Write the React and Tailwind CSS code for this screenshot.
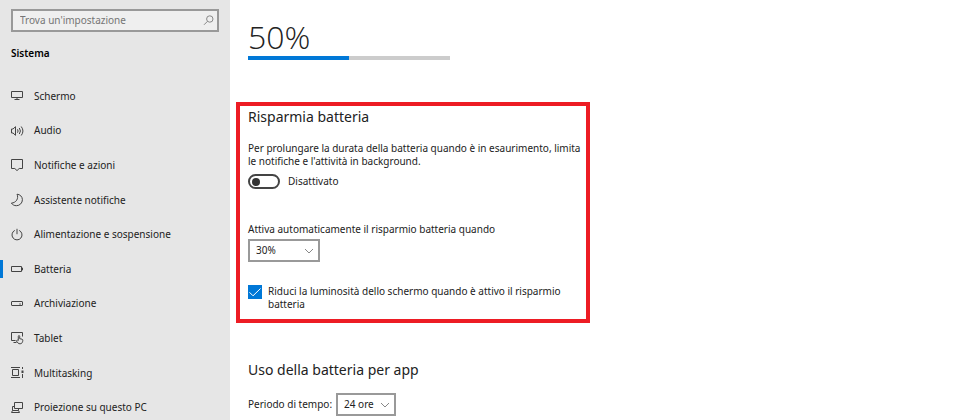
import { useState } from "react";

// icons are drawn on a 14px grid
function Icon({ children }) {
  return (
    <svg
      className="h-[14px] w-[14px] shrink-0"
      viewBox="0 0 14 14"
      fill="none"
      stroke="#444"
      strokeWidth="1"
      aria-hidden="true"
    >
      {children}
    </svg>
  );
}

const items = [
  {
    label: "Schermo",
    icon: <path d="M1.5 2.500h11v6h-11zM7 8.500v2M4.500 10.500h5" />,
  },
  {
    label: "Audio",
    icon: (
      <>
        <path d="M1.500 5h1.500l2.500-2.300v8.600L3 9H1.500z" />
        <path d="M7.500 5.300a3 3 0 0 1 0 3.400M9.300 4a5 5 0 0 1 0 6M11.200 2.500a7.400 7.400 0 0 1 0 9" />
      </>
    ),
  },
  {
    label: "Notifiche e azioni",
    icon: <path d="M1.500 1.500h11v9H9.200L7 12.600 4.800 10.500H1.500z" />,
  },
  {
    label: "Assistente notifiche",
    icon: (
      <path d="M7 1.200c3.100.2 5.400 2.500 5.400 5.500a6 6 0 0 1-6 6c-2.100 0-3.900-.9-5-2.600C6 9.900 9 5.500 7 1.200z" />
    ),
  },
  {
    label: "Alimentazione e sospensione",
    icon: <path d="M7 .8v5.400M4.800 2.400a5 5 0 1 0 4.400 0" />,
  },
  {
    label: "Batteria",
    icon: <path d="M1.500 4.500h10v5h-10zM12.500 5.700v2.600" />,
  },
  {
    label: "Archiviazione",
    icon: (
      <>
        <rect x="1.500" y="4.500" width="11" height="4" rx=".5" />
        <path d="M9.300 7h1.500" />
      </>
    ),
  },
  {
    label: "Tablet",
    icon: (
      <>
        <path d="M5.500 9.500h-4v-8h11v4M3.500 11.500h3" />
        <path d="M8.300 9.500V5.300c0-1 1.400-1 1.400 0v2.400l2.300.5c.6.200.8.500.8 1.100-.1 2-.9 3.500-2.700 3.500-1.700 0-2.500-1-3.800-3 .6-.8 1.300-.8 2-.3z" />
      </>
    ),
  },
  {
    label: "Multitasking",
    icon: (
      <>
        <path d="M2.500 3.500h6v6h-6zM1 1.500h9M1 11.500h9" />
        <path d="M12.500 1v2M12.500 8v4" />
        <path d="M12.500 4.500v2.500" strokeWidth="2" />
      </>
    ),
  },
  {
    label: "Proiezione su questo PC",
    icon: <path d="M4.500 1.500h8v6h-8zM4.500 5.500h-2v4h6v-2M2.500 9.500l-1 2h8l-1-2" />,
  },
];

function Chevron() {
  return (
    <svg
      className="pointer-events-none absolute top-1/2 right-[6px] h-[10px] w-[10px] -translate-y-1/2"
      viewBox="0 0 10 10"
      fill="none"
      stroke="#888"
      aria-hidden="true"
    >
      <path d="M1 3l4 4 4-4" />
    </svg>
  );
}

function Dropdown({ id, value, onChange, options, className }) {
  return (
    <div className={`relative ${className}`}>
      <select
        id={id}
        value={value}
        onChange={(e) => onChange(e.target.value)}
        className="h-[23px] w-full appearance-none border-2 border-[#999] bg-white pl-[6px] text-[10px]"
      >
        {options.map((o) => (
          <option key={o}>{o}</option>
        ))}
      </select>
      <Chevron />
    </div>
  );
}

function Sidebar() {
  const [active, setActive] = useState("Batteria");

  return (
    <aside className="w-[230px] shrink-0 overflow-hidden bg-[#e6e6e6] pt-[9px]">
      <div className="relative mr-[11px] ml-[11px]">
        <input
          type="text"
          aria-label="Trova un'impostazione"
          placeholder="Trova un'impostazione"
          className="block h-[23px] w-full border-2 border-[#999] bg-[#efefef] pr-6 pb-[2px] pl-[7px] text-[10px] placeholder:text-[#757575]"
        />
        <svg
          className="pointer-events-none absolute top-[6px] right-[5px] h-[11px] w-[11px]"
          viewBox="0 0 11 11"
          fill="none"
          stroke="#888"
          aria-hidden="true"
        >
          <circle cx="6.800" cy="4" r="3.200" />
          <path d="M4.500 6.300L1 9.800" />
        </svg>
      </div>
      <h2 className="mt-[13px] ml-[11px] text-[10px] leading-4 font-semibold text-black">
        Sistema
      </h2>
      <nav className="mt-[18px] grid min-h-[346px] auto-rows-fr">
        {items.map((item) => (
          <a
            key={item.label}
            href="#"
            onClick={() => setActive(item.label)}
            className="flex items-center"
          >
            <span
              className={`h-[18px] w-[3px] ${active === item.label ? "bg-[#0078d7]" : ""}`}
            />
            <span className="ml-[7px] flex items-center gap-[10px]">
              <Icon>{item.icon}</Icon>
              {item.label}
            </span>
          </a>
        ))}
      </nav>
    </aside>
  );
}

export default function App() {
  const [saver, setSaver] = useState(false);
  const [dim, setDim] = useState(true);
  const [threshold, setThreshold] = useState("30%");
  const [period, setPeriod] = useState("24 ore");
  const level = 50;

  return (
    <div className="flex h-screen overflow-hidden bg-white font-['Noto_Sans','Open_Sans',sans-serif] text-[10px] leading-[13px] text-[#222]">
      <Sidebar />
      <main className="min-w-0 flex-1 overflow-hidden pt-[18px] pl-[6px]">
        {/* livello della batteria */}
        <section className="w-[214px] pl-3">
          <h1 className="font-['Open_Sans',sans-serif] text-[32px] leading-[38px] font-light">
            {level}%
          </h1>
          <div className="h-[4px] bg-[#ccc]">
            <div className="h-full bg-[#0078d7]" style={{ width: `${level}%` }} />
          </div>
        </section>

        {/* risparmio batteria */}
        <section className="mt-[42px] max-w-[354px] border-4 border-[#ed1c24] pt-[1px] pb-2 pl-2">
          <h2 className="text-[14px] leading-5">Risparmia batteria</h2>
          <p className="mt-[15px] max-w-[336px]">
            Per prolungare la durata della batteria quando è in esaurimento, limita
            le notifiche e l'attività in background.
          </p>
          <div className="mt-[6px] flex items-center gap-[8px]">
            <button
              type="button"
              role="switch"
              aria-checked={saver}
              aria-labelledby="saver-label"
              onClick={() => setSaver(!saver)}
              className={`flex h-[15px] w-[32px] items-center rounded-full border-2 border-[#444] px-[2px] ${saver ? "justify-end" : ""}`}
            >
              <span className="h-[8px] w-[8px] rounded-full bg-[#333]" />
            </button>
            <span id="saver-label">{saver ? "Attivato" : "Disattivato"}</span>
          </div>

          <label htmlFor="threshold" className="mt-[34px] block">
            Attiva automaticamente il risparmio batteria quando
          </label>
          <Dropdown
            id="threshold"
            value={threshold}
            onChange={setThreshold}
            options={["10%", "20%", "30%", "40%", "50%"]}
            className="mt-[3px] w-[72px]"
          />

          <div className="mt-[23px] flex gap-[6px]">
            <span className="relative h-[14px] w-[14px] shrink-0">
              <input
                id="dim"
                type="checkbox"
                checked={dim}
                onChange={(e) => setDim(e.target.checked)}
                className="block h-[14px] w-[14px] appearance-none border border-[#444] checked:border-[#0078d7] checked:bg-[#0078d7]"
              />
              {dim && (
                <svg
                  className="pointer-events-none absolute inset-0"
                  viewBox="0 0 14 14"
                  fill="none"
                  stroke="#fff"
                  aria-hidden="true"
                >
                  <path d="M1.500 7.300l3.500 3.500L12.500 3.500" />
                </svg>
              )}
            </span>
            <label htmlFor="dim" className="max-w-[310px]">
              Riduci la luminosità dello schermo quando è attivo il risparmio
              batteria
            </label>
          </div>
        </section>

        {/* uso per app */}
        <section className="mt-[37px] pl-3">
          <h2 className="text-[14px] leading-5">Uso della batteria per app</h2>
          <div className="mt-[13px] flex items-center gap-[4px]">
            <label htmlFor="period">Periodo di tempo:</label>
            <Dropdown
              id="period"
              value={period}
              onChange={setPeriod}
              options={["24 ore", "1 settimana"]}
              className="w-[60px]"
            />
          </div>
        </section>
      </main>
    </div>
  );
}
